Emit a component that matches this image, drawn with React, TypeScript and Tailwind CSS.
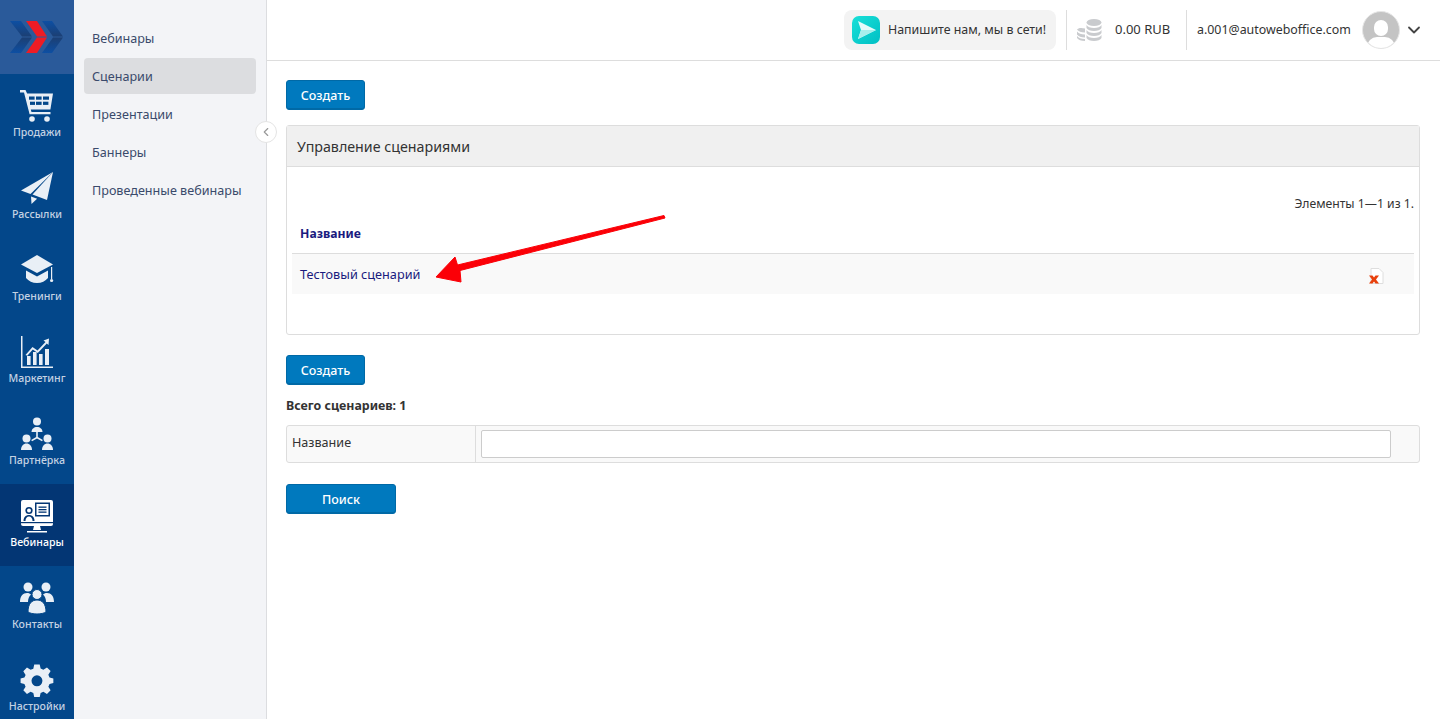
import React from "react";
import { ChevronDown, ChevronLeft } from "lucide-react";

const CartIcon = () => (
  <svg viewBox="0 0 34 34" className="h-[34px] w-[34px]" fill="#e9eff6">
    <path d="M0 1h5.500l1.600 3.500H33l-2.600 16H10.800l.7 2.400h19v2.400H9.600L4 3.600H0z" fillRule="evenodd" />
    <g fill="#03478a">
      <rect x="9" y="7.500" width="5.600" height="3.200" />
      <rect x="16" y="7.500" width="5.600" height="3.200" />
      <rect x="23" y="7.500" width="6" height="3.200" />
      <rect x="10" y="12.700" width="5" height="3.200" />
      <rect x="16" y="12.700" width="5.600" height="3.200" />
      <rect x="23" y="12.700" width="5.400" height="3.200" />
    </g>
    <circle cx="12" cy="30" r="2.800" />
    <circle cx="27" cy="30" r="2.800" />
  </svg>
);

const PlaneIcon = () => (
  <svg viewBox="0 0 34 34" className="h-[34px] w-[34px]" fill="#e9eff6">
    <path d="M33 1 1 19.500l9.500 3.400z" />
    <path d="M33 1 12.500 23.500l14.500 5.500z" />
    <path d="M11 25.500 11.500 33l5.600-5.200z" />
  </svg>
);

const CapIcon = () => (
  <svg viewBox="0 0 34 34" className="h-[34px] w-[34px]" fill="#e9eff6">
    <path d="M17 2 33 11.500 17 20 1 11.500z" />
    <path d="M6 17.500 17 23.500 28 17.500V25c-2.500 3-6.500 5-11 5S8.500 28 6 25z" />
    <path d="M31 14h1.200v12H31z" />
    <circle cx="31.600" cy="27.500" r="1.600" />
  </svg>
);

const ChartIcon = () => (
  <svg viewBox="0 0 34 34" className="h-[34px] w-[34px]" fill="#e9eff6">
    <path d="M1 1h1.500v30.500H33V33H1z" />
    <rect x="7" y="21" width="3.600" height="9" />
    <rect x="13" y="17" width="3.600" height="13" />
    <rect x="19" y="19" width="3.600" height="11" />
    <rect x="25" y="14" width="4" height="16" />
    <path d="M5.500 20 12.500 12l5 3.500L25.500 7l-2-1.500L29 3.500 28.500 10l-1.700-1.600-9 9.500-5-3.500-5.500 6.400z" />
  </svg>
);

const PartnerIcon = () => (
  <svg viewBox="0 0 34 34" className="h-[34px] w-[34px]" fill="#e9eff6">
    <circle cx="17" cy="4.500" r="4" />
    <path d="M11.500 15c0-3 2.500-5 5.500-5s5.500 2 5.500 5z" />
    <circle cx="6.500" cy="21.500" r="4" />
    <path d="M1 33c0-4 2.500-6.500 5.500-6.500S12 29 12 33z" />
    <circle cx="27.500" cy="21.500" r="4" />
    <path d="M22 33c0-4 2.500-6.500 5.500-6.500S33 29 33 33z" />
    <path d="M16.200 15h1.600v5l5 3-.8 1.300-5-2.800-5 2.800-.8-1.300 5-3z" />
  </svg>
);

const WebinarIcon = () => (
  <svg viewBox="0 0 34 34" className="h-[34px] w-[34px]" fill="#ffffff">
    <path d="M3 1h28a2 2 0 0 1 2 2v22a2 2 0 0 1-2 2H3a2 2 0 0 1-2-2V3a2 2 0 0 1 2-2z" />
    <path d="M13 31h8l-1-4h-6zM7 32h20v1.500H7z" />
    <g fill="#033674">
      <path d="M15 3.500h15v14H15zM16.500 5v11h12V5z" fillRule="evenodd" />
      <rect x="18.500" y="7.500" width="8" height="1.300" />
      <rect x="18.500" y="10" width="8" height="1.300" />
      <rect x="18.500" y="12.500" width="8" height="1.300" />
      <circle cx="9" cy="11.500" r="3.600" />
      <path d="M3.500 22c0-4 2.500-6 5.500-6s5.500 2 5.500 6z" />
      <rect x="1" y="23" width="32" height="1.200" />
    </g>
    <circle cx="9" cy="11.500" r="2" />
    <path d="M5.500 22c0-2.800 1.500-4.500 3.500-4.500s3.500 1.700 3.500 4.500z" />
  </svg>
);

const ContactsIcon = () => (
  <svg viewBox="0 0 34 34" className="h-[34px] w-[34px]" fill="#e9eff6">
    <circle cx="8" cy="6" r="4.500" />
    <circle cx="26" cy="6" r="4.500" />
    <path d="M0 21c0-6 3-9 7-9 2 0 3 .6 4 1.500-2 1.800-3 4.500-3 7.500z" />
    <path d="M34 21c0-6-3-9-7-9-2 0-3 .6-4 1.500 2 1.800 3 4.500 3 7.500z" />
    <path d="M17 8.500a5 5 0 1 1 0 10 5 5 0 0 1 0-10z" stroke="#03478a" strokeWidth="1" />
    <path d="M8 31c0-8 3.500-12 9-12s9 4 9 12c-2 1.200-5 2-9 2s-7-.8-9-2z" stroke="#03478a" strokeWidth="1" />
  </svg>
);

const GearIcon = () => (
  <svg viewBox="0 0 34 34" className="h-[34px] w-[34px]" fill="#e9eff6">
    <path
      fillRule="evenodd"
      d="M14 1h6l1 4.500 3 1.300 4-2.500 4 4-2.500 4 1.300 3L35 16.500v5l-4.200 1-1.300 3 2.500 4-4 4-4-2.500-3 1.300L20 37h-6l-1-4.700-3-1.300-4 2.500-4-4 2.500-4-1.300-3L-1 21.500v-5l4.200-1 1.300-3-2.500-4 4-4 4 2.500 3-1.300zM17 13a6 6 0 1 0 0 12 6 6 0 0 0 0-12z"
      transform="translate(1.500 0.500) scale(0.91)"
    />
  </svg>
);

const railItems = [
  { label: "Продажи", icon: <CartIcon /> },
  { label: "Рассылки", icon: <PlaneIcon /> },
  { label: "Тренинги", icon: <CapIcon /> },
  { label: "Маркетинг", icon: <ChartIcon /> },
  { label: "Партнёрка", icon: <PartnerIcon /> },
  { label: "Вебинары", icon: <WebinarIcon />, active: true },
  { label: "Контакты", icon: <ContactsIcon /> },
  { label: "Настройки", icon: <GearIcon /> },
];

const subItems = ["Вебинары", "Сценарии", "Презентации", "Баннеры", "Проведенные вебинары"];

const Logo = () => (
  <svg viewBox="0 0 54 34" className="h-[34px] w-[54px]">
    <defs>
      <linearGradient id="logoTop" x1="0" y1="0" x2="0" y2="1">
        <stop offset="0" stopColor="#0d4fa3" />
        <stop offset="1" stopColor="#1c3f73" />
      </linearGradient>
      <linearGradient id="logoBottom" x1="0" y1="0" x2="0" y2="1">
        <stop offset="0" stopColor="#1c3f73" />
        <stop offset="1" stopColor="#0d4fa3" />
      </linearGradient>
    </defs>
    <path d="M0 1h11l11 15.500H12z" fill="url(#logoTop)" />
    <path d="M0 33h11l11-15.500H12z" fill="url(#logoBottom)" />
    <path d="M32 1h10l11 15.500H43z" fill="url(#logoTop)" />
    <path d="M32 33h10l11-15.500H43z" fill="url(#logoBottom)" />
    <path d="M16 1h11l10 15.500H27z" fill="#ee1c25" />
    <path d="M16 33h11l10-15.500H27z" fill="#ee1c25" />
  </svg>
);

const Button = ({ children, width }: { children: React.ReactNode; width: string }) => (
  <button className={`${width} h-[30px] rounded-[3px] border border-[#0069a6] bg-[#0079be] pt-[2px] text-[12.500px] font-medium text-white shadow-[inset_0_-1px_0_#0069a6]`}>
    {children}
  </button>
);

export default function App() {
  return (
    <div className="relative flex h-screen overflow-hidden bg-white font-['Noto_Sans',sans-serif] text-[#333]">
      {/* Icon rail */}
      <aside className="flex w-[74px] shrink-0 flex-col bg-[#03478a]">
        <div className="flex h-[74px] shrink-0 items-center justify-center bg-[#2a5a9a]">
          <Logo />
        </div>
        {railItems.map((item) => (
          <div
            key={item.label}
            className={
              item.active
                ? "flex h-[82px] shrink-0 flex-col items-center bg-[#033674] pt-[15px] text-white"
                : "flex h-[82px] shrink-0 flex-col items-center pt-[15px] text-[#c3d2e3]"
            }
          >
            {item.icon}
            <span className="mt-[1px] text-[10.600px] leading-[16px] font-medium">{item.label}</span>
          </div>
        ))}
      </aside>

      {/* Section menu */}
      <nav className="flex w-[193px] shrink-0 flex-col gap-[2px] border-r border-[#dcdde0] bg-[#f3f4f7] pt-[20px] pr-[10px] pl-[10px]">
        {subItems.map((item) => (
          <div
            key={item}
            className={
              item === "Сценарии"
                ? "flex h-[36px] items-center rounded-[4px] bg-[#dcdde0] px-[8px] pt-[2px] text-[12.600px] text-[#3a4a6b]"
                : "flex h-[36px] items-center px-[8px] pt-[2px] text-[12.600px] text-[#3a4a6b]"
            }
          >
            {item}
          </div>
        ))}
      </nav>

      <div className="absolute top-[121px] left-[255px] flex h-[22px] w-[22px] items-center justify-center rounded-full border border-[#e4e4e4] bg-white">
        <ChevronLeft size={14} strokeWidth={2} className="text-[#999]" />
      </div>

      <div className="flex min-w-0 flex-1 flex-col">
        {/* Header */}
        <header className="flex h-[61px] shrink-0 items-center justify-end border-b border-[#dddddd] pr-[20px]">
          <div className="flex h-[40px] w-[212px] items-center gap-[8px] rounded-[8px] bg-[#f3f3f3] pl-[8px]">
            <svg viewBox="0 0 28 28" className="h-[28px] w-[28px]">
              <defs>
                <linearGradient id="chat" x1="0" y1="0" x2="1" y2="1">
                  <stop offset="0" stopColor="#19e0d8" />
                  <stop offset="1" stopColor="#00bfc4" />
                </linearGradient>
              </defs>
              <rect width="28" height="28" rx="7" fill="url(#chat)" />
              <path d="M6 5 24 14 6 23l3-9z" fill="#e4fbfa" />
              <path d="M9 14h15L6 23z" fill="#a6efec" />
            </svg>
            <span className="text-[12.400px] whitespace-nowrap">Напишите нам, мы в сети!</span>
          </div>
          <div className="ml-[10px] h-[40px] w-px bg-[#dddddd]" />
          <svg viewBox="0 0 25 22" className="ml-[10px] h-[22px] w-[25px]" fill="#c9cbce">
            <ellipse cx="17" cy="3.500" rx="7.500" ry="3.500" />
            <path d="M9.500 6c1 2 4 3 7.500 3s6.500-1 7.500-3v3c-1 2-4 3-7.500 3S10.500 11 9.500 9z" />
            <path d="M9.500 11c1 2 4 3 7.500 3s6.500-1 7.500-3v3c-1 2-4 3-7.500 3s-6.500-1-7.500-3z" />
            <path d="M9.500 16c1 2 4 3 7.500 3s6.500-1 7.500-3v3c-1 2-4 3-7.500 3s-6.500-1-7.500-3z" />
            <path d="M8 9.500v4C4 13.500 1.500 12.500 0 10.500c1-1.500 4-2 8-1z" />
            <path d="M0 12.500c1.500 2 4 3 8 3v3c-4 0-6.500-1-8-3zM0 17c1.500 2 4 3 8 3v2c-4 0-6.500-1-8-3z" />
          </svg>
          <span className="ml-[13px] w-[55px] text-[13px] whitespace-nowrap">0.00 RUB</span>
          <div className="ml-[16px] h-[40px] w-px bg-[#dddddd]" />
          <span className="ml-[10px] w-[155px] text-[12.400px] whitespace-nowrap">a.001@autoweboffice.com</span>
          <div className="relative ml-[10px] h-[38px] w-[38px] overflow-hidden rounded-full border border-[#e6e6e6] bg-[#c4c4c4]">
            <div className="absolute top-[8px] left-[11px] h-[16px] w-[14px] rounded-full bg-white" />
            <div className="absolute top-[25px] left-[4px] h-[20px] w-[28px] rounded-full bg-white" />
          </div>
          <ChevronDown size={20} strokeWidth={2.200} className="mr-[-4px] ml-[4px] text-[#444]" />
        </header>

        {/* Content */}
        <main className="flex flex-col items-start pt-[19px] pr-[20px] pl-[19px]">
          <Button width="w-[79px]">Создать</Button>

          <section className="mt-[15px] h-[210px] w-full rounded-[3px] border border-[#dddddd]">
            <div className="flex h-[41px] items-center border-b border-[#dddddd] bg-[#f0f0f0] px-[10px] pt-[2px] text-[14.250px]">
              Управление сценариями
            </div>
            <div className="px-[5px]">
              <p className="pt-[28px] text-right text-[12.200px] leading-[18px]">Элементы 1—1 из 1.</p>
              <div className="flex h-[41px] items-center border-b border-[#dddddd] pt-[2px] pl-[8px] text-[12.200px] font-bold text-[#1a1a7e]">
                Название
              </div>
              <div className="relative flex h-[40px] items-center bg-[#f9f9f9] pt-[1px] pl-[8px] text-[12.700px] text-[#1a1a7e]">
                Тестовый сценарий
                <svg viewBox="0 0 16 17" className="absolute top-[14px] right-[30px] h-[17px] w-[16px]">
                  <path d="M3 0.500h8l4 4v11H3z" fill="#fff" stroke="#dedede" />
                  <path d="M1 7.500h3.500L6 9.500l1.500-2H11L8 11.500l3 4H7.500L6 13.500l-1.500 2H1l3-4z" fill="#e8400c" />
                </svg>
              </div>
            </div>
          </section>

          <div className="mt-[20px]">
            <Button width="w-[79px]">Создать</Button>
          </div>
          <p className="mt-[12px] text-[12.400px] leading-[18px] font-bold">Всего сценариев: 1</p>

          <div className="mt-[10px] flex h-[38px] w-full rounded-[3px] border border-[#dddddd] bg-[#f9f9f9]">
            <div className="flex w-[189px] shrink-0 items-center border-r border-[#dddddd] pb-[2px] pl-[5px] text-[12.600px]">Название</div>
            <div className="flex flex-1 items-center pr-[28px] pl-[5px]">
              <input className="h-[28px] w-full rounded-[2px] border border-[#cccccc] bg-white" />
            </div>
          </div>

          <div className="mt-[21px]">
            <Button width="w-[110px]">Поиск</Button>
          </div>
        </main>
      </div>

      {/* Annotation arrow */}
      <svg className="absolute top-[205px] left-[430px] h-[85px] w-[240px]" viewBox="0 0 240 85" fill="#fb0007">
        <path d="M234 10.500 235 13 30 65.500 31 77 6 72 25 52 27.500 60z" stroke="#fb0007" strokeWidth="1" strokeLinejoin="round" />
      </svg>
    </div>
  );
}
